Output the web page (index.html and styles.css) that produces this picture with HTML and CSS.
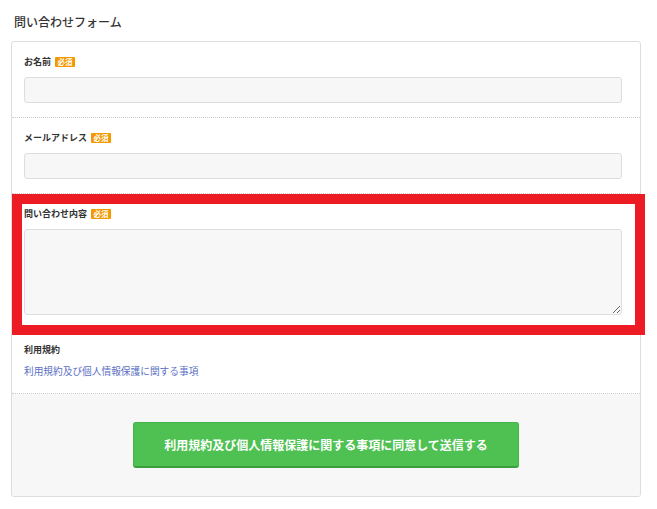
FILE: index.html
```html
<!DOCTYPE html>
<html lang="ja">
<head>
    <meta charset="UTF-8">
    <meta name="viewport" content="width=device-width, initial-scale=1.0">
    <title>問い合わせフォーム</title>
    <link rel="stylesheet" href="styles.css">
</head>
<body>
    <h2 class="form-title">問い合わせフォーム</h2>

    <form class="form-card">
        <div class="field">
            <label class="field-label">お名前<span class="required">必須</span></label>
            <input type="text" class="field-input">
        </div>

        <div class="field">
            <label class="field-label">メールアドレス<span class="required">必須</span></label>
            <input type="email" class="field-input">
        </div>

        <div class="field field-marked">
            <label class="field-label">問い合わせ内容<span class="required">必須</span></label>
            <textarea class="field-input field-textarea"></textarea>
            <div class="highlight"></div>
        </div>

        <div class="field field-terms">
            <p class="field-label">利用規約</p>
            <a href="#" class="terms-link">利用規約及び個人情報保護に関する事項</a>
        </div>

        <div class="form-footer">
            <button type="button" class="submit-btn">利用規約及び個人情報保護に関する事項に同意して送信する</button>
        </div>
    </form>
</body>
</html>
```

FILE: styles.css
```css
* {
    margin: 0;
    padding: 0;
    box-sizing: border-box;
}

body {
    font-family: "Noto Sans CJK JP", "Noto Sans", sans-serif;
    background: #fff;
    color: #333;
    padding: 13px 16px 0 11px;
}

.form-title {
    font-size: 12px;
    font-weight: 500;
    line-height: 18px;
    padding-left: 3px;
    margin-bottom: 10px;
    color: #333;
}

.form-card {
    border: 1px solid #ddd;
    border-radius: 3px;
    background: #fff;
}

.field {
    position: relative;
    padding: 13px 18px 14px 12px;
    border-bottom: 1px dotted #ccc;
}

.field-label {
    display: flex;
    align-items: center;
    font-size: 9px;
    font-weight: bold;
    line-height: 14px;
    height: 14px;
    margin-bottom: 8px;
    color: #333;
}

.required {
    display: inline-block;
    width: 20px;
    height: 10px;
    margin-left: 4px;
    background: #f39800;
    color: #fff;
    font-size: 7.5px;
    font-weight: bold;
    line-height: 10px;
    text-align: center;
    border-radius: 1px;
}

.field-input {
    display: block;
    width: 100%;
    height: 26px;
    background: #f7f7f7;
    border: 1px solid #ddd;
    border-radius: 3px;
    font-family: inherit;
    outline: none;
}

.field-textarea {
    height: 86px;
}

.highlight {
    position: absolute;
    top: 0;
    left: 0;
    right: -5px;
    bottom: -6px;
    border: 10px solid #ed1c24;
    pointer-events: none;
}

.field-terms {
    padding-bottom: 15px;
}

.field-terms .field-label {
    margin-bottom: 7px;
}

.terms-link {
    display: block;
    font-size: 9.7px;
    line-height: 14px;
    color: #5b6fc4;
    text-decoration: none;
}

.form-footer {
    display: flex;
    justify-content: center;
    padding: 28px 0 28px;
    background: #f7f7f7;
    border-radius: 0 0 3px 3px;
}

.submit-btn {
    width: 386px;
    height: 46px;
    background: #4fc153;
    border: 1px solid #44b348;
    border-bottom: 2px solid #3b9f3f;
    border-radius: 3px;
    color: #fff;
    font-family: inherit;
    font-size: 12px;
    font-weight: bold;
    cursor: pointer;
}
```
